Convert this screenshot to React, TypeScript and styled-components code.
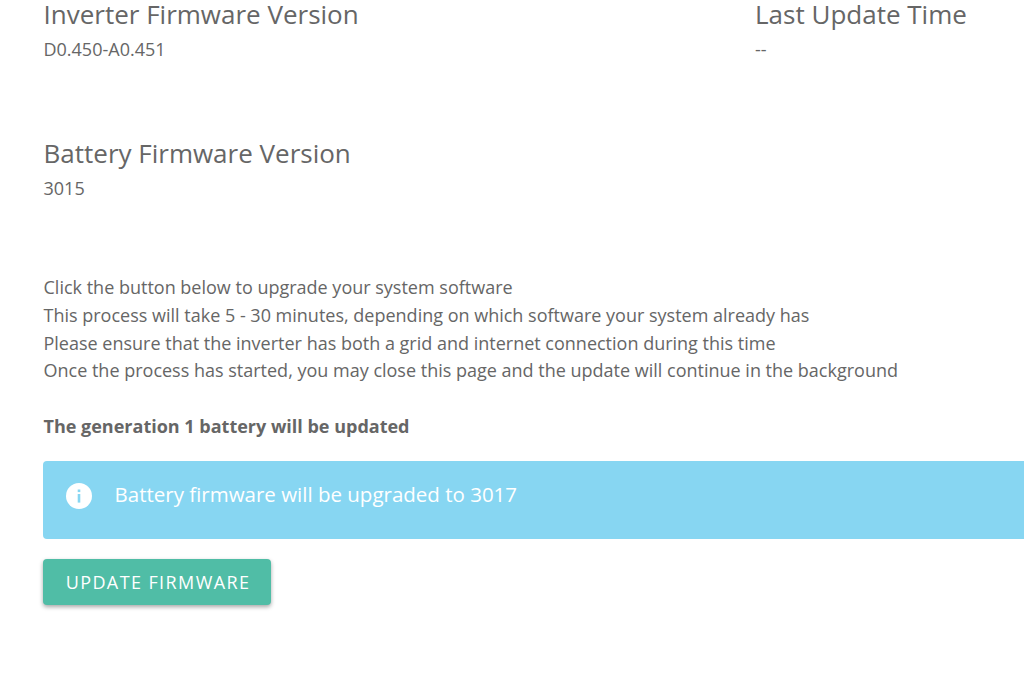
import React from "react";
import styled, { createGlobalStyle } from "styled-components";

const GlobalStyle = createGlobalStyle`
  html, body {
    margin: 0;
    padding: 0;
    background: #fff;
    overflow: hidden;
  }
  body {
    font-family: "Open Sans", "Liberation Sans", sans-serif;
    color: #666;
  }
`;

const Page = styled.div`
  width: 1024px;
  height: 695px;
  overflow: hidden;
  padding-left: 43.5px;
  box-sizing: border-box;
`;

const VersionRow = styled.div`
  display: grid;
  grid-template-columns: 711.5px 1fr;
  height: 139px;
`;

const VersionBlock = styled.div`
  display: flex;
  flex-direction: column;
`;

const VersionTitle = styled.div`
  font-size: 26px;
  line-height: 29px;
  margin-bottom: 3px;
  white-space: nowrap;
`;

const VersionValue = styled.div`
  font-size: 18px;
  line-height: 34px;
  white-space: nowrap;
`;

const Instructions = styled.div`
  margin-top: 69px;
  font-size: 18px;
  line-height: 27.75px;
  white-space: nowrap;
`;

const BoldNote = styled.div`
  margin-top: 27px;
  font-size: 18px;
  line-height: 28px;
  font-weight: 700;
`;

const InfoBanner = styled.div`
  margin: 21px 0 0 -0.5px;
  width: 990px;
  height: 78px;
  background: #87d6f2;
  border-radius: 4px;
  display: flex;
  align-items: center;
  gap: 23px;
  padding: 0 0 8px 22.5px;
  box-sizing: border-box;
  color: #fff;
  font-size: 20.5px;
`;

const BannerText = styled.span`
  margin-bottom: 4px;
`;

const UpdateButton = styled.button`
  display: block;
  margin: 20px 0 0 -0.5px;
  width: 228px;
  height: 46px;
  padding: 0 0 0 2px;
  border: none;
  border-radius: 4px;
  background: #50bda6;
  color: #fff;
  font-family: inherit;
  font-size: 18px;
  letter-spacing: 1.4px;
  box-shadow: 0 2px 4px rgba(0, 0, 0, 0.35);
`;

const InfoIcon = () => (
  <svg width="26" height="26" viewBox="0 0 26 26">
    <circle cx="13" cy="13" r="13" fill="#fff" />
    <rect x="11.7" y="11" width="2.6" height="8.6" fill="#87d6f2" />
    <rect x="11.7" y="6.5" width="2.6" height="2.6" fill="#87d6f2" />
  </svg>
);

export default function App() {
  return (
    <Page>
      <GlobalStyle />
      <VersionRow>
        <VersionBlock>
          <VersionTitle>Inverter Firmware Version</VersionTitle>
          <VersionValue>D0.450-A0.451</VersionValue>
        </VersionBlock>
        <VersionBlock>
          <VersionTitle>Last Update Time</VersionTitle>
          <VersionValue>--</VersionValue>
        </VersionBlock>
      </VersionRow>
      <VersionBlock>
        <VersionTitle>Battery Firmware Version</VersionTitle>
        <VersionValue>3015</VersionValue>
      </VersionBlock>
      <Instructions>
        Click the button below to upgrade your system software
        <br />
        This process will take 5 - 30 minutes, depending on which software your system already has
        <br />
        Please ensure that the inverter has both a grid and internet connection during this time
        <br />
        Once the process has started, you may close this page and the update will continue in the background
      </Instructions>
      <BoldNote>The generation 1 battery will be updated</BoldNote>
      <InfoBanner>
        <InfoIcon />
        <BannerText>Battery firmware will be upgraded to 3017</BannerText>
      </InfoBanner>
      <UpdateButton>UPDATE FIRMWARE</UpdateButton>
    </Page>
  );
}
